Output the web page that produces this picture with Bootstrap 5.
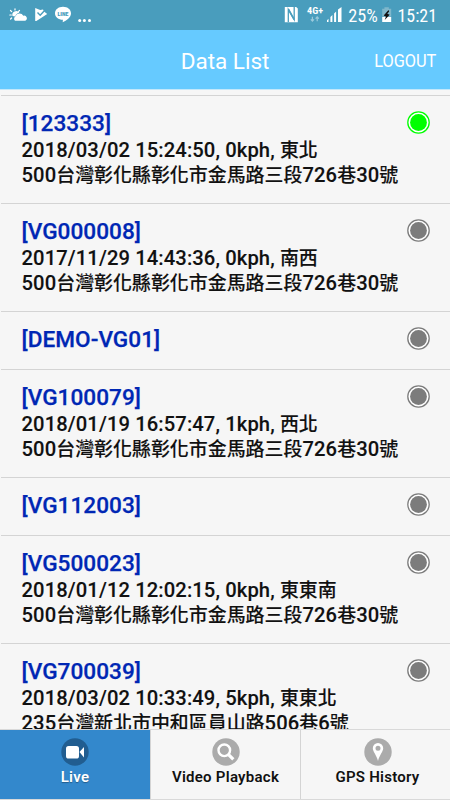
<!DOCTYPE html>
<html lang="zh-Hant">
<head>
<meta charset="utf-8">
<meta name="viewport" content="width=device-width, initial-scale=1">
<title>Data List</title>
<link rel="stylesheet" href="https://cdn.jsdelivr.net/npm/bootstrap@5.3.0/dist/css/bootstrap.min.css">
<style>
body{font-family:Roboto,"Noto Sans CJK TC",sans-serif;background:#f6f6f6;color:#111;height:800px}
.status-bar{height:30px;background:#499dbd;padding:0 12px 0 9px;font-family:"Roboto Condensed",Roboto,sans-serif}
.status-bar svg{display:block}
.app-bar{height:60px;background:#66caff;border-bottom:1px solid #c3e8fb;display:grid;grid-template-columns:1fr auto 1fr;padding:4px 14px 0}
.app-title{font-size:22.5px;line-height:54px}
.cond{display:inline-block;white-space:nowrap}
.logout{font-size:19px;width:62px;line-height:54px}
.logout .cond{transform:scaleX(.86);transform-origin:right}
.device-list{margin-left:1px;padding-top:5px;min-height:0}
.device{border-top:1px solid #d4d4d4;height:108.15px;padding:13px 20px 0 20.5px;flex:none}
.device.short{height:57.6px}
.device-name{color:#0027b4;font-size:22.6px;line-height:29px;font-weight:500;letter-spacing:.04px;-webkit-text-stroke:.25px}
.device-info{font-size:20.2px;line-height:25.6px;height:25px;font-weight:500;white-space:nowrap;letter-spacing:.1px;-webkit-text-stroke:.1px}
.han{font-size:18.95px;line-height:1;letter-spacing:0}
.lamp{width:23px;height:23px;margin-top:2px;color:#7c7c7c;flex:none}
.lamp.on{color:#0f0}
.tabs{height:71px;border-top:1px solid #d9d9d9;border-bottom:1px solid #d9d9d9;flex:none}
.tab-item{flex:0 0 150px;color:#111;font-size:15px;font-weight:600;line-height:22px;letter-spacing:.26px;padding-top:8px}
.tab-item+.tab-item{border-left:1px solid #d4d4d4}
.tab-item:last-child{padding-left:4px}
.tab-item.active{background:#3388cc;color:#fff;text-shadow:0 1px 1px #245d8c}
.disc{width:28px;height:28px}
</style>
<script src="https://cdn.jsdelivr.net/npm/bootstrap@5.3.0/dist/js/bootstrap.bundle.min.js"></script>
</head>
<body class="d-flex flex-column overflow-hidden">
<div class="status-bar d-flex align-items-center justify-content-between text-white flex-shrink-0">
  <svg width="90" height="30" fill="#fff">
    <g stroke="#fff" stroke-width="1.2" stroke-linecap="round"><path d="M6 8.8v1.2M1.5 10.5l1.2 1.2M.8 15h1.5M1.6 19l1-1M10.5 10.5l-1.2 1.2"/></g>
    <path d="M3.5 16a3.8 3.8 0 0 1 6.8-3.2 5 5 0 0 0-4 3.7z"/>
    <path d="M6 20.8a2.8 2.8 0 0 1 .5-4.5 4.2 4.2 0 0 1 7.8-.5 2.7 2.7 0 0 1 2 5z"/>
    <path d="M26.2 8l5 2.1 2.8-.7 1.4 2.3 2.8 2.3-10.8 7.1h-1.2z"/><path d="M28.5 12.6l2.7 2.7 4.6-5" fill="none" stroke="#499dbd" stroke-width="1.4"/>
    <path d="M54 6.8c4.7 0 8 2.8 8 6.6 0 3.6-4.5 7.2-8.3 8.8l.2-2.4c-4.4-.1-7.9-2.7-7.9-6.3 0-3.9 3.4-6.7 8-6.7z"/>
    <text x="54" y="15.8" text-anchor="middle" textLength="11" lengthAdjust="spacingAndGlyphs" font-size="5.4" font-weight="900" fill="#499dbd">LINE</text>
    <circle cx="70.7" cy="20.5" r="1.5"/><circle cx="75.4" cy="20.5" r="1.5"/><circle cx="80.5" cy="20.5" r="1.5"/>
  </svg>
  <svg width="155" height="30" fill="#fff">
    <path d="M3.2 7h10l1.6 1.5v13.8H1.8V7z"/><path d="M5.3 22V9.5l5.9 10.2V7" fill="none" stroke="#499dbd" stroke-width="1.3"/><path d="M5.6 9.5l5.6 10.2" stroke="#499dbd" stroke-width="1.6"/>
    <text x="24" y="14" font-size="8.3" font-weight="700" textLength="16" lengthAdjust="spacingAndGlyphs">4G+</text>
    <path d="M29.4 16.8v4M27.8 19.3l1.6 1.7 1.6-1.7M34.2 21.3v-4M32.6 18.7l1.6-1.7 1.6 1.7" fill="none" stroke="#9bcadc" stroke-width="1.2"/>
    <path d="M44 22v-1.8l1.5-1.5V22zM47.4 22v-5l2-2v7zM51.1 22v-8.5l2-2V22zM55 22V9.5L58.5 6.9V22z"/>
    <text x="65.3" y="21.8" font-size="19" textLength="29.5" lengthAdjust="spacingAndGlyphs">25%</text>
    <path d="M101.4 7.2h4.4v1.6h2.4v8h-9v-8h2.2z" fill="#7fb7cb"/><path d="M99.2 17h9v5h-9z"/><path d="M105.5 10l-4.8 5.6 2.3 1-1.3 3.5 5-5.3-2.4-1 1.8-2.2z" fill="#111"/>
    <text x="114.5" y="21.8" font-size="19" textLength="39.5" lengthAdjust="spacingAndGlyphs">15:21</text>
  </svg>
</div>
<header class="app-bar text-white flex-shrink-0">
  <span></span><span class="app-title">Data List</span>
  <a class="logout text-white text-decoration-none ms-auto d-flex justify-content-end" href="#"><span class="cond">LOGOUT</span></a>
</header>
<main class="device-list flex-grow-1 overflow-hidden d-flex flex-column" id="devices"></main>
<nav class="tabs d-flex text-center">
  <a class="tab-item active text-decoration-none" href="#"><svg class="disc d-block mx-auto" viewBox="0 0 28 28"><circle cx="14" cy="14" r="13.7" fill="#215d90"/><rect x="5" y="8" width="13" height="12.5" rx="2.6" fill="#fff"/><path d="M18.5 14l4.5-5v10.5z" fill="#fff"/></svg>Live</a>
  <a class="tab-item text-decoration-none text-nowrap" href="#"><svg class="disc d-block mx-auto" viewBox="0 0 28 28"><circle cx="14" cy="14" r="13.7" fill="#ababab"/><circle cx="12.3" cy="12.3" r="5.8" fill="none" stroke="#fff" stroke-width="2.4"/><path d="M16.3 16.3l5 5" stroke="#fff" stroke-width="3.2"/></svg>Video Playback</a>
  <a class="tab-item text-decoration-none text-nowrap" href="#"><svg class="disc d-block mx-auto" viewBox="0 0 28 28"><circle cx="14" cy="14" r="13.7" fill="#ababab"/><path fill="#fff" fill-rule="evenodd" d="M14 5a5.2 5.2 0 0 1 5.2 5.2c0 3.5-3.7 6.5-5.2 12.8-1.5-6.3-5.2-9.3-5.2-12.8A5.2 5.2 0 0 1 14 5zm0 2.8a2.5 2.5 0 1 0 0 5 2.5 2.5 0 0 0 0-5z"/></svg>GPS History</a>
</nav>
<script>
const home='500台灣彰化縣彰化市金馬路三段726巷30號';
const devices=[
 ['123333','2018/03/02 15:24:50, 0kph, 東北',home,true],
 ['VG000008','2017/11/29 14:43:36, 0kph, 南西',home],
 ['DEMO-VG01'],
 ['VG100079','2018/01/19 16:57:47, 1kph, 西北',home],
 ['VG112003'],
 ['VG500023','2018/01/12 12:02:15, 0kph, 東東南',home],
 ['VG700039','2018/03/02 10:33:49, 5kph, 東東北','235台灣新北市中和區員山路506巷6號']
];
const han=s=>s.replace(/[\u4e00-\u9fff]+/g,'<span class="han">$&</span>');
document.getElementById('devices').innerHTML=devices.map(([name,info,addr,on])=>`
<section class="device ${info?'':'short'}">
 <div class="d-flex justify-content-between align-items-start"><div class="device-name">[${name}]</div>
 <svg class="lamp ${on?'on':''}" viewBox="0 0 23 23"><circle cx="11.5" cy="11.5" r="10.7" fill="#fff" stroke="currentColor" stroke-width="1.3"/><circle cx="11.5" cy="11.5" r="8.4" fill="currentColor"/></svg></div>
 ${info?`<div class="device-info">${han(info)}</div><div class="device-info">${han(addr)}</div>`:''}
</section>`).join('');
</script>
</body>
</html>
